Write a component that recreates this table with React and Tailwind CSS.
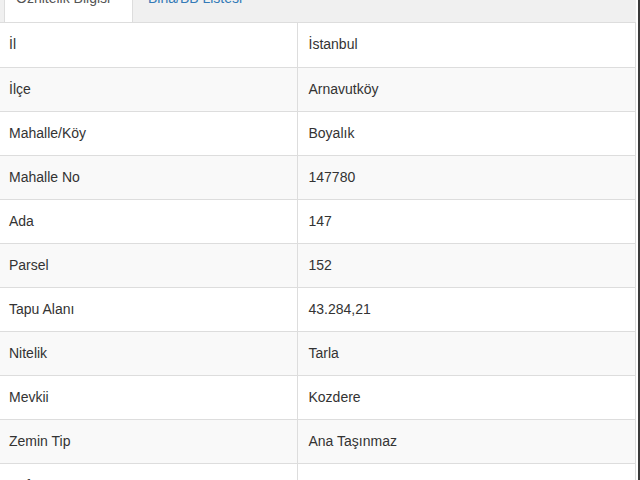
const rows = [
  ['İl', 'İstanbul'],
  ['İlçe', 'Arnavutköy'],
  ['Mahalle/Köy', 'Boyalık'],
  ['Mahalle No', '147780'],
  ['Ada', '147'],
  ['Parsel', '152'],
  ['Tapu Alanı', '43.284,21'],
  ['Nitelik', 'Tarla'],
  ['Mevkii', 'Kozdere'],
  ['Zemin Tip', 'Ana Taşınmaz'],
  ['Pafta', 'F21-C-23-A-1-C'],
];

export default function App() {
  return (
    <div className="flex h-[480px] w-[640px] overflow-hidden bg-white font-['Liberation_Sans',Arial,sans-serif] text-[14px] text-[#333]">
      <div className="flex w-[636px] flex-col">
        {/* Tabs */}
        <div className="flex h-[23px] shrink-0 items-start overflow-hidden border-b border-[#ddd] bg-[#f0f0f0] pl-[4px]">
          <div className="flex h-[23px] w-[129px] shrink-0 items-start border-x border-[#ddd] bg-white pl-[11px] leading-[20px] text-[#555]">
            <span className="mt-[-12px] whitespace-nowrap">Öznitelik Bilgisi</span>
          </div>
          <div className="flex h-[23px] items-start pl-[15px] leading-[20px] text-[#337ab7]">
            <span className="mt-[-12px] whitespace-nowrap">Bina/BB Listesi</span>
          </div>
        </div>

        {/* Table */}
        <table className="w-full shrink-0 border-collapse border-r border-[#ddd]">
          <tbody>
            {rows.map(([k, v], i) => (
              <tr key={k} className={i % 2 === 1 ? 'bg-[#f9f9f9]' : 'bg-white'}>
                <td className="h-[44px] w-[297px] border-b border-r border-[#ddd] pl-[9px] align-middle">{k}</td>
                <td className="h-[44px] border-b border-[#ddd] pl-[11px] align-middle">{v}</td>
              </tr>
            ))}
          </tbody>
        </table>
      </div>
      <div className="w-[2px] shrink-0 bg-white" />
      <div className="w-[2px] shrink-0 bg-[#3a3a3a]" />
    </div>
  );
}
